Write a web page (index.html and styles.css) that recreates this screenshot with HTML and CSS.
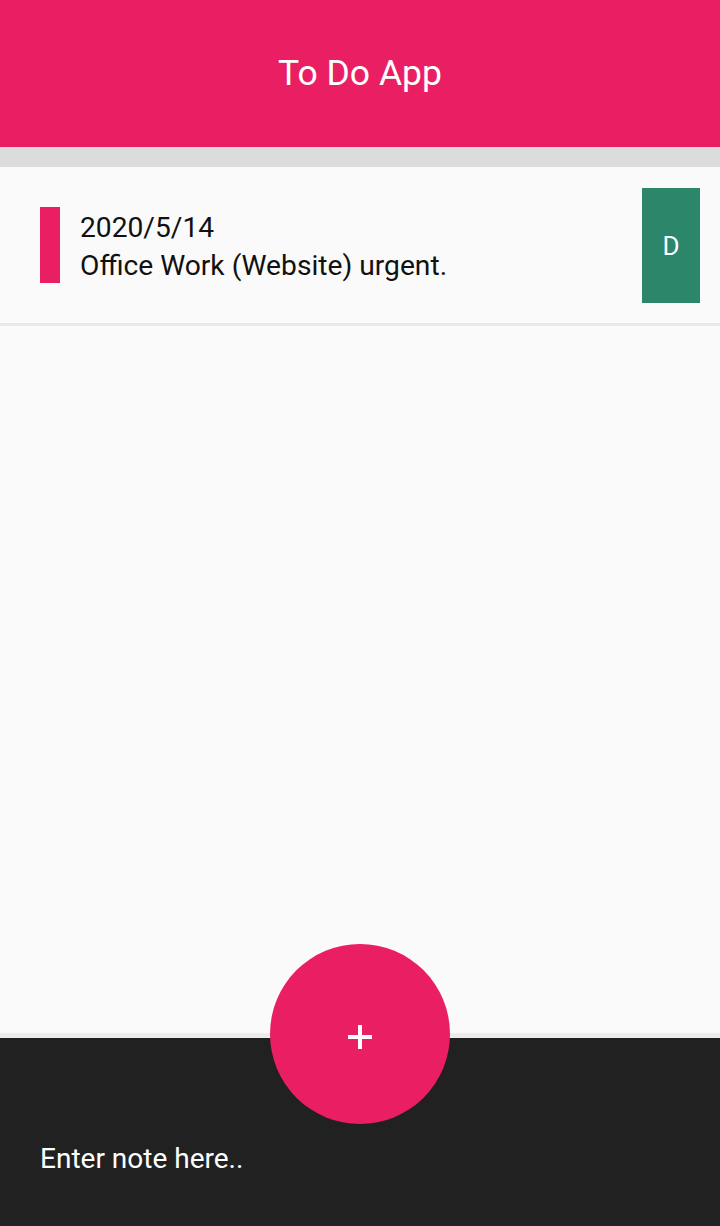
FILE: index.html
```html
<!DOCTYPE html>
<html>
<head>
<meta charset="utf-8">
<link rel="stylesheet" href="styles.css">
</head>
<body>
<div class="app">
  <header class="appbar"><h1 class="title">To Do App</h1></header>
  <div class="band"></div>
  <ul class="list">
    <li class="item">
      <span class="marker"></span>
      <div class="text">
        <div class="date">2020/5/14</div>
        <div class="note">Office Work (Website) urgent.</div>
      </div>
      <button class="del">D</button>
    </li>
  </ul>
  <div class="spacer"></div>
  <footer class="composer">
    <button class="fab" aria-label="Add">
      <svg width="26" height="26" viewBox="0 0 26 26"><rect x="11" y="1" width="4" height="24" fill="#fff"/><rect x="1" y="11" width="24" height="4" fill="#fff"/></svg>
    </button>
    <div class="placeholder">Enter note here..</div>
  </footer>
</div>
</body>
</html>
```

FILE: styles.css
```css
html, body { margin: 0; padding: 0; }
body { font-family: Roboto, "Noto Sans", sans-serif; background: #fafafa; }
.app { display: flex; flex-direction: column; height: 1226px; width: 720px; overflow: hidden; }
.appbar { height: 147px; background: #e91e63; display: flex; align-items: center; justify-content: center; }
.title { margin: 0; color: #fff; font-weight: 400; font-size: 35.5px; line-height: 1; }
.band { height: 20px; background: #dcdcdc; }
.list { list-style: none; margin: 0; padding: 0; }
.item { display: flex; align-items: center; padding: 40px 20px 40px 40px; border-bottom: 3px solid #e9e9e9; background: #fafafa; height: 76px; }
.marker { width: 20px; height: 76px; background: #e91e63; flex: none; }
.text { flex: 1; padding: 3px 0 0 20px; font-size: 28.2px; line-height: 38px; color: #111; }
.del { width: 58px; height: 115px; background: #2b866a; color: #fff; border: 0; font-family: Roboto, sans-serif; font-size: 26px; padding: 2px 0 0; flex: none; }
.spacer { flex: 1; }
.composer { position: relative; height: 188px; background: #212121; border-top: 5px solid #ececec; display: flex; align-items: center; }
.placeholder { color: #fff; font-size: 28px; padding-left: 40px; margin-top: 52px; }
.fab { position: absolute; left: 270px; top: -94px; width: 180px; height: 180px; border-radius: 50%; background: #e91e63; border: 0; padding: 0; display: flex; align-items: center; justify-content: center; }
.fab svg { margin-top: 5px; }
```
